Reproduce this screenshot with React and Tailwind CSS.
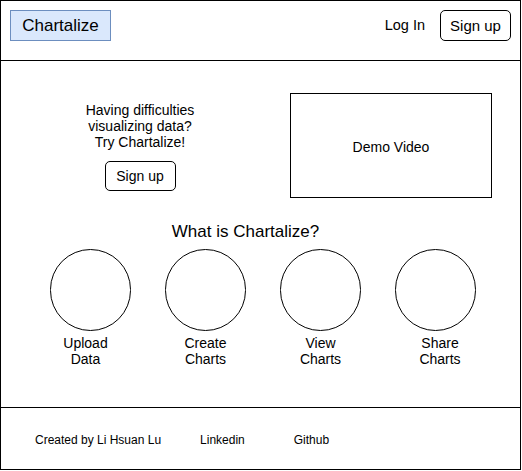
export default function App() {
  const items = [
    ["Upload", "Data", "mr-[10px]"],
    ["Create", "Charts", ""],
    ["View", "Charts", ""],
    ["Share", "Charts", "ml-[9px]"],
  ];
  return (
    <div
      className="w-[521px] h-[470px] border border-black bg-white flex flex-col text-black"
      style={{ fontFamily: '"Liberation Sans", Arial, sans-serif' }}
    >
      <header className="h-[60px] border-b border-black flex items-start justify-between pl-[9px] pr-[9px] pt-[9px] shrink-0">
        <div className="w-[101px] h-[31px] bg-[#dae8fc] border border-[#6c8ebf] flex items-center justify-center text-[17px] pt-[1px]">
          Chartalize
        </div>
        <div className="flex items-center">
          <span className="text-[14.5px] mr-[15px] pt-[1px]">Log In</span>
          <button className="w-[71px] h-[31px] border border-black rounded-[5px] text-[15px] flex items-center justify-center pt-[1px]">
            Sign up
          </button>
        </div>
      </header>
      <main className="flex-1 flex flex-col">
        <div className="flex items-start pt-[32px]">
          <div className="w-[200px] ml-[39px] mt-[9px] flex flex-col items-center">
            <p className="text-[14px] leading-[16px] text-center">
              Having difficulties
              <br />
              visualizing data?
              <br />
              Try Chartalize!
            </p>
            <button className="mt-[11px] w-[71px] h-[30px] border border-black rounded-[5px] text-[14px] flex items-center justify-center pt-[1px]">
              Sign up
            </button>
          </div>
          <div className="ml-[50px] w-[202px] h-[105px] border border-black flex items-center justify-center text-[14px] pt-[3px]">
            Demo Video
          </div>
        </div>
        <h2 className="mt-[23px] text-[17px] leading-[20px] text-center mr-[30px] pt-[1px]">
          What is Chartalize?
        </h2>
        <div className="flex pl-[32px] mt-[7px]">
          {items.map(([a, b, off]) => (
            <div key={a} className="w-[115px] flex flex-col items-center">
              <div className="w-[81px] h-[82px] rounded-full border border-black" />
              <div className={`mt-[4px] text-[14px] leading-[16px] text-center ${off}`}>
                {a}
                <br />
                {b}
              </div>
            </div>
          ))}
        </div>
      </main>
      <footer className="h-[62px] border-t border-black flex items-center text-[12px] shrink-0 pt-[3px]">
        <span className="ml-[34px]">Created by Li Hsuan Lu</span>
        <span className="ml-[39px]">Linkedin</span>
        <span className="ml-[49px]">Github</span>
      </footer>
    </div>
  );
}
